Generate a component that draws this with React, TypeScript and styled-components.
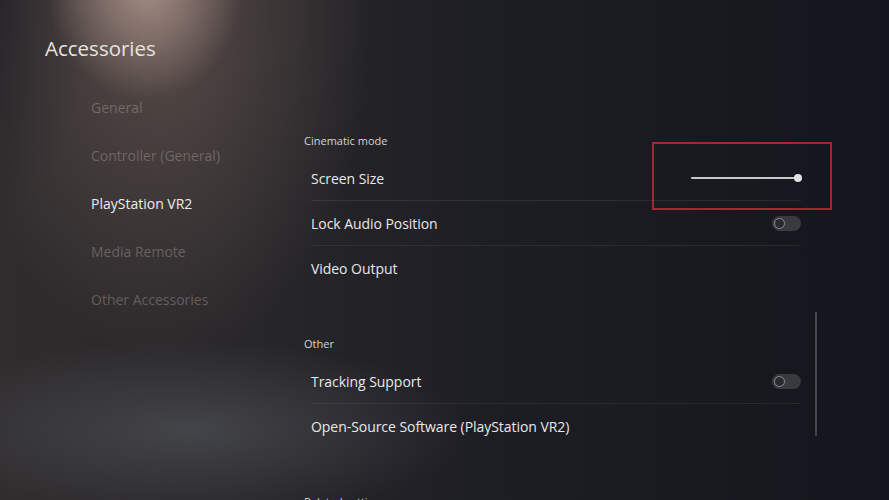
import React from 'react';
import styled, {createGlobalStyle} from 'styled-components';

const GlobalStyle = createGlobalStyle`
    html, body {
        margin: 0;
        padding: 0;
        background: #14161d;
    }
`;

const navItems = ['General', 'Controller (General)', 'PlayStation VR2', 'Media Remote', 'Other Accessories'];

const App = () => {
    return (
        <Page>
            <GlobalStyle/>
            <Title>Accessories</Title>
            <Body>
                <Nav>
                    {navItems.map((item) => (
                        <NavItem
                            key={item}
                            $active={item === 'PlayStation VR2'}
                        >
                            {item}
                        </NavItem>
                    ))}
                </Nav>
                <Content>
                    <Sections>
                        <Section title={'Cinematic mode'}>
                            <Row label={'Screen Size'}>
                                <Slider/>
                                <Highlight/>
                            </Row>
                            <Row label={'Lock Audio Position'}>
                                <Toggle/>
                            </Row>
                            <Row
                                label={'Video Output'}
                                last={true}
                            />
                        </Section>
                        <Section title={'Other'}>
                            <Row label={'Tracking Support'}>
                                <Toggle/>
                            </Row>
                            <Row
                                label={'Open-Source Software (PlayStation VR2)'}
                                last={true}
                            />
                        </Section>
                        <Section title={'Related settings'}/>
                    </Sections>
                    <ScrollTrack>
                        <ScrollThumb/>
                    </ScrollTrack>
                </Content>
            </Body>
        </Page>
    );
};

interface SectionProps {
    title: string
    children?: React.ReactNode
}

const Section = ({title, children}: SectionProps) => {
    return (
        <SectionWrapper>
            <SectionTitle>{title}</SectionTitle>
            {children}
        </SectionWrapper>
    );
};

interface RowProps {
    label: string
    last?: boolean
    children?: React.ReactNode
}

const Row = ({label, last, children}: RowProps) => {
    return (
        <RowWrapper $last={last}>
            <RowLabel>{label}</RowLabel>
            {children}
        </RowWrapper>
    );
};

const Slider = () => (
    <SliderTrack>
        <SliderKnob/>
    </SliderTrack>
);

const Toggle = () => (
    <ToggleBody>
        <ToggleKnob/>
    </ToggleBody>
);

const Page = styled.div`
    width: 889px;
    height: 500px;
    overflow: hidden;
    font-family: "Open Sans", "Noto Sans", sans-serif;
    background:
        radial-gradient(ellipse 100px 120px at 145px -20px, rgba(205, 175, 165, 0.7), rgba(205, 175, 165, 0) 100%),
        radial-gradient(ellipse 210px 340px at 165px 20px, rgba(130, 108, 100, 0.5), rgba(130, 108, 100, 0) 100%),
        radial-gradient(ellipse 90px 220px at 0px 0px, rgba(22, 24, 32, 0.75), rgba(22, 24, 32, 0) 100%),
        radial-gradient(ellipse 280px 90px at 190px 430px, rgba(88, 92, 98, 0.55), rgba(88, 92, 98, 0) 100%),
        linear-gradient(to right, #2f2c2d 0%, #29272a 25%, #1d1e24 55%, #14161d 100%);
`;

const Title = styled.h1`
    margin: 0;
    padding: 35px 0 0 45px;
    height: 26px;
    font-size: 20.5px;
    line-height: 26px;
    font-weight: 400;
    color: #e6e3e1;
`;

const Body = styled.div`
    display: flex;
    margin-top: 23px;
`;

const Nav = styled.nav`
    display: flex;
    flex-direction: column;
    width: 213px;
    padding-left: 91px;
`;

const NavItem = styled.div<{$active?: boolean}>`
    height: 48px;
    line-height: 48px;
    font-size: 14px;
    white-space: nowrap;
    color: ${(p) => (p.$active ? '#eeeceb' : 'rgba(185, 178, 174, 0.38)')};
`;

const Content = styled.div`
    display: flex;
    padding-top: 49px;
`;

const Sections = styled.div`
    display: flex;
    flex-direction: column;
    gap: 45px;
    width: 497px;
`;

const SectionWrapper = styled.section`
    display: flex;
    flex-direction: column;
`;

const SectionTitle = styled.div`
    height: 16px;
    line-height: 16px;
    margin-bottom: 7px;
    font-size: 11px;
    color: #d4d4d6;
`;

const RowWrapper = styled.div<{$last?: boolean}>`
    position: relative;
    display: flex;
    align-items: center;
    justify-content: space-between;
    box-sizing: border-box;
    height: 45px;
    margin-left: 7px;
    border-bottom: 1px solid ${(p) => (p.$last ? 'transparent' : 'rgba(255, 255, 255, 0.08)')};
`;

const RowLabel = styled.span`
    font-size: 14px;
    letter-spacing: -0.05px;
    color: #e8e8ea;
`;

const SliderTrack = styled.div`
    position: relative;
    width: 107px;
    height: 2px;
    margin-right: 3px;
    background: #c9c9cc;
    border-radius: 1px;
`;

const SliderKnob = styled.div`
    position: absolute;
    right: -4px;
    top: -3px;
    width: 8px;
    height: 8px;
    border-radius: 50%;
    background: #e2e2e4;
`;

const Highlight = styled.div`
    position: absolute;
    left: 341px;
    top: -14px;
    width: 180px;
    height: 68px;
    box-sizing: border-box;
    border: 2px solid rgba(192, 40, 52, 0.85);
    pointer-events: none;
`;

const ToggleBody = styled.div`
    display: flex;
    align-items: center;
    box-sizing: border-box;
    width: 29px;
    height: 15px;
    padding-left: 2px;
    border-radius: 8px;
    background: #393a40;
`;

const ToggleKnob = styled.div`
    box-sizing: border-box;
    width: 11px;
    height: 11px;
    border-radius: 50%;
    border: 1.5px solid #8c8c92;
    background: #2a2b30;
`;

const ScrollTrack = styled.div`
    position: relative;
    width: 2px;
    margin-left: 14px;
    align-self: stretch;
`;

const ScrollThumb = styled.div`
    position: absolute;
    top: 179px;
    left: 0;
    width: 2px;
    height: 124px;
    background: #46474d;
`;

export default App;
